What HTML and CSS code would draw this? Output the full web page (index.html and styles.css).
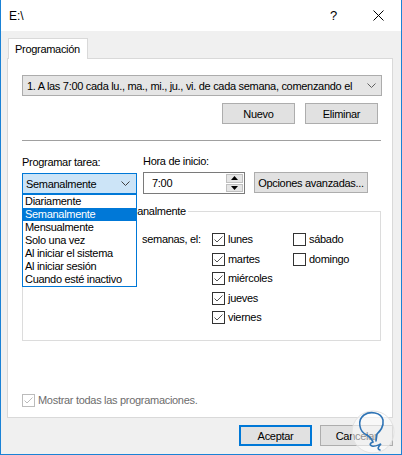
FILE: index.html
```html
<!DOCTYPE html>
<html lang="es">
<head>
<meta charset="utf-8">
<title>E:\</title>
<link rel="stylesheet" href="styles.css">
</head>
<body>
<div class="window">
  <div class="titlebar">
    <span class="title">E:\</span>
    <span class="help">?</span>
    <svg class="close" width="11" height="11" viewBox="0 0 11 11"><path d="M0.5 0.5 L10.5 10.5 M10.5 0.5 L0.5 10.5" stroke="#000" stroke-width="1" fill="none"/></svg>
  </div>
  <div class="body">
    <div class="tabs"><div class="tab">Programación</div></div>
    <div class="panel">
      <div class="combo">
        <span class="combo-text">1. A las 7:00 cada lu., ma., mi., ju., vi. de cada semana, comenzando el</span>
        <svg class="chev" width="9" height="5" viewBox="0 0 9 5"><polyline points="0.5,0.5 4.5,4.5 8.5,0.5" fill="none" stroke="#606060"/></svg>
      </div>
      <div class="btnrow">
        <button class="btn">Nuevo</button>
        <button class="btn">Eliminar</button>
      </div>
      <div class="sep"></div>
      <div class="schedrow">
        <div class="field f-task">
          <span class="lbl">Programar tarea:</span>
          <div class="select-wrap">
            <div class="select">
              <span>Semanalmente</span>
              <svg class="chev" width="9" height="5" viewBox="0 0 9 5"><polyline points="0.5,0.5 4.5,4.5 8.5,0.5" fill="none" stroke="#404040"/></svg>
            </div>
            <ul class="dropdown">
              <li>Diariamente</li>
              <li class="sel">Semanalmente</li>
              <li>Mensualmente</li>
              <li>Solo una vez</li>
              <li>Al iniciar el sistema</li>
              <li>Al iniciar sesión</li>
              <li>Cuando esté inactivo</li>
            </ul>
          </div>
        </div>
        <div class="field f-time">
          <span class="lbl">Hora de inicio:</span>
          <div class="timebox">
            <span class="time">7:00</span>
            <div class="spin">
              <div class="spin-btn"><svg width="7" height="4" viewBox="0 0 7 4"><polygon points="3.5,0 7,4 0,4" fill="#000"/></svg></div>
              <div class="spin-btn"><svg width="7" height="4" viewBox="0 0 7 4"><polygon points="0,0 7,0 3.5,4" fill="#000"/></svg></div>
            </div>
          </div>
        </div>
        <button class="btn btn-adv">Opciones avanzadas...</button>
      </div>
      <fieldset class="group">
        <legend>Programar tarea semanalmente</legend>
        <div class="weekly">
          <div class="every"></div>
          <span class="weeks">semanas, el:</span>
          <div class="days">
            <label class="day"><span class="cb"><svg width="11" height="11" viewBox="0 0 11 11"><polyline points="1.5,5.5 4,8 9.5,2.5" fill="none" stroke="#555"/></svg></span>lunes</label>
            <label class="day"><span class="cb"><svg width="11" height="11" viewBox="0 0 11 11"><polyline points="1.5,5.5 4,8 9.5,2.5" fill="none" stroke="#555"/></svg></span>martes</label>
            <label class="day"><span class="cb"><svg width="11" height="11" viewBox="0 0 11 11"><polyline points="1.5,5.5 4,8 9.5,2.5" fill="none" stroke="#555"/></svg></span>miércoles</label>
            <label class="day"><span class="cb"><svg width="11" height="11" viewBox="0 0 11 11"><polyline points="1.5,5.5 4,8 9.5,2.5" fill="none" stroke="#555"/></svg></span>jueves</label>
            <label class="day"><span class="cb"><svg width="11" height="11" viewBox="0 0 11 11"><polyline points="1.5,5.5 4,8 9.5,2.5" fill="none" stroke="#555"/></svg></span>viernes</label>
            <label class="day"><span class="cb"></span>sábado</label>
            <label class="day"><span class="cb"></span>domingo</label>
          </div>
        </div>
      </fieldset>
      <label class="showall"><span class="cb cb-disabled"><svg width="11" height="11" viewBox="0 0 11 11"><polyline points="1.5,5.5 4,8 9.5,2.5" fill="none" stroke="#bcbcbc"/></svg></span>Mostrar todas las programaciones.</label>
    </div>
    <div class="footer">
      <button class="btn btn-default">Aceptar</button>
      <button class="btn">Cancelar</button>
    </div>
  </div>
  <svg class="watermark" width="46" height="51" viewBox="0 0 46 51">
    <circle cx="23" cy="28" r="21" fill="rgba(255,255,255,0.55)" stroke="#e2e2e2" stroke-width="1"/>
    <path d="M17,31 C9,28 7,16 14,11 C20,7 31,8 33,16 C34,23 30,27 27,30 L26,37" fill="none" stroke="#2f74b5" stroke-width="1.6" stroke-linecap="round"/>
    <path d="M17,31 C20,33 22,35 23,38 C20,39 19,41 22,42 C25,43 28,41 31,40 C28,43 27,45 30,46" fill="none" stroke="#2f74b5" stroke-width="1.6" stroke-linecap="round"/>
  </svg>
</div>
</body>
</html>
```

FILE: styles.css
```css
* { box-sizing: border-box; }

body {
  margin: 0;
  font-family: "Liberation Sans", Arial, sans-serif;
  font-size: 11px;
  letter-spacing: -0.3px;
  color: #000;
}

.window {
  position: relative;
  width: 402px;
  height: 455px;
  border: 1px solid #1a82d6;
  border-top: none;
  background: #f0f0f0;
  display: flex;
  flex-direction: column;
  overflow: hidden;
}

.titlebar {
  height: 31px;
  flex: none;
  background: #fff;
  display: flex;
  align-items: center;
  padding-left: 8px;
}

.title { flex: 1; font-size: 12px; letter-spacing: 0; }

.help {
  font-size: 13px;
  margin-right: 36px;
}

.close { margin-right: 17px; }

.body {
  flex: 1;
  display: flex;
  flex-direction: column;
  padding: 7px 8px 0 6px;
}

.tabs {
  display: flex;
  padding-left: 1px;
}

.tab {
  position: relative;
  z-index: 1;
  width: 80px;
  height: 21px;
  margin-bottom: -1px;
  background: #fff;
  border: 1px solid #d9d9d9;
  border-bottom: none;
  padding-left: 6px;
  line-height: 20px;
}

.panel {
  height: 360px;
  background: #fff;
  border: 1px solid #d9d9d9;
  display: flex;
  flex-direction: column;
  padding: 0 10px 0 14px;
}

.combo {
  margin-top: 16px;
  width: 360px;
  height: 21px;
  background: #e5e5e5;
  border: 1px solid #acacac;
  display: flex;
  align-items: center;
  padding: 0 5px 0 4px;
}

.combo-text {
  flex: 1;
  white-space: nowrap;
  overflow: hidden;
}

.btnrow {
  margin-top: 7px;
  display: flex;
  justify-content: flex-end;
  gap: 10px;
  margin-right: 4px;
}

.btn {
  width: 73px;
  height: 21px;
  padding: 0;
  background: #e1e1e1;
  border: 1px solid #adadad;
  font-family: inherit;
  font-size: 11px;
  letter-spacing: inherit;
  color: #000;
}

.sep {
  margin-top: 16px;
  width: 359px;
  height: 1px;
  background: #a0a0a0;
}

.schedrow {
  margin-top: 13px;
  display: flex;
  align-items: flex-end;
}

.field {
  display: flex;
  flex-direction: column;
}

.lbl {
  line-height: 14px;
  margin-bottom: 4px;
  white-space: nowrap;
}

.f-task { width: 115px; }

.select-wrap { position: relative; }

.select {
  height: 21px;
  background: #cce4f7;
  border: 1px solid #0078d7;
  display: flex;
  align-items: center;
  justify-content: space-between;
  padding: 0 6px 0 3px;
}

.dropdown {
  position: absolute;
  z-index: 5;
  left: 0;
  top: 21px;
  width: 115px;
  margin: 0;
  padding: 0;
  list-style: none;
  background: #fff;
  border: 1px solid #0078d7;
}

.dropdown li {
  height: 13px;
  line-height: 13px;
  padding-left: 2px;
  white-space: nowrap;
}

.dropdown li.sel {
  background: #0078d7;
  color: #fff;
}

.f-time {
  margin-left: 6px;
  width: 102px;
}

.timebox {
  height: 22px;
  background: #fff;
  border: 1px solid #7a7a7a;
  display: flex;
  align-items: center;
  padding: 0 1px 0 8px;
}

.time { flex: 1; }

.spin {
  width: 17px;
  height: 20px;
  display: flex;
  flex-direction: column;
  gap: 1px;
  padding: 1px 0;
}

.spin-btn {
  flex: 1;
  background: #e5e5e5;
  border: 1px solid #c0c0c0;
  display: flex;
  align-items: center;
  justify-content: center;
}

.btn-adv {
  width: 114px;
  margin-left: 9px;
  margin-bottom: 1px;
}

.group {
  margin: 10px 0 0 0;
  width: 359px;
  border: 1px solid #dcdcdc;
  padding: 15px 0 9px 0;
  min-width: 0;
}

.group legend {
  padding: 0 2px;
  margin-left: 14px;
  line-height: 14px;
}

.weekly {
  display: grid;
  grid-template-columns: 119px 70px auto;
  align-items: start;
}

.weeks {
  line-height: 13px;
  white-space: nowrap;
}

.days {
  display: grid;
  grid-template-columns: 81px auto;
  grid-template-rows: 20px 19px 20px 19px 20px;
  grid-auto-flow: column;
}

.day {
  display: flex;
  align-items: flex-start;
  gap: 3px;
  line-height: 13px;
  height: 13px;
}

.cb {
  width: 13px;
  height: 13px;
  flex: none;
  border: 1px solid #333;
  background: #fff;
  display: flex;
}

.showall {
  margin-top: auto;
  margin-bottom: 10px;
  display: flex;
  align-items: center;
  gap: 3px;
  color: #6d6d6d;
  line-height: 13px;
}

.cb-disabled { border-color: #bcbcbc; }

.footer {
  display: flex;
  justify-content: flex-end;
  gap: 8px;
  padding: 7px 0 0 0;
}

.btn-default {
  border: 2px solid #0078d7;
}

.watermark {
  position: absolute;
  left: 349px;
  top: 404px;
}
```
